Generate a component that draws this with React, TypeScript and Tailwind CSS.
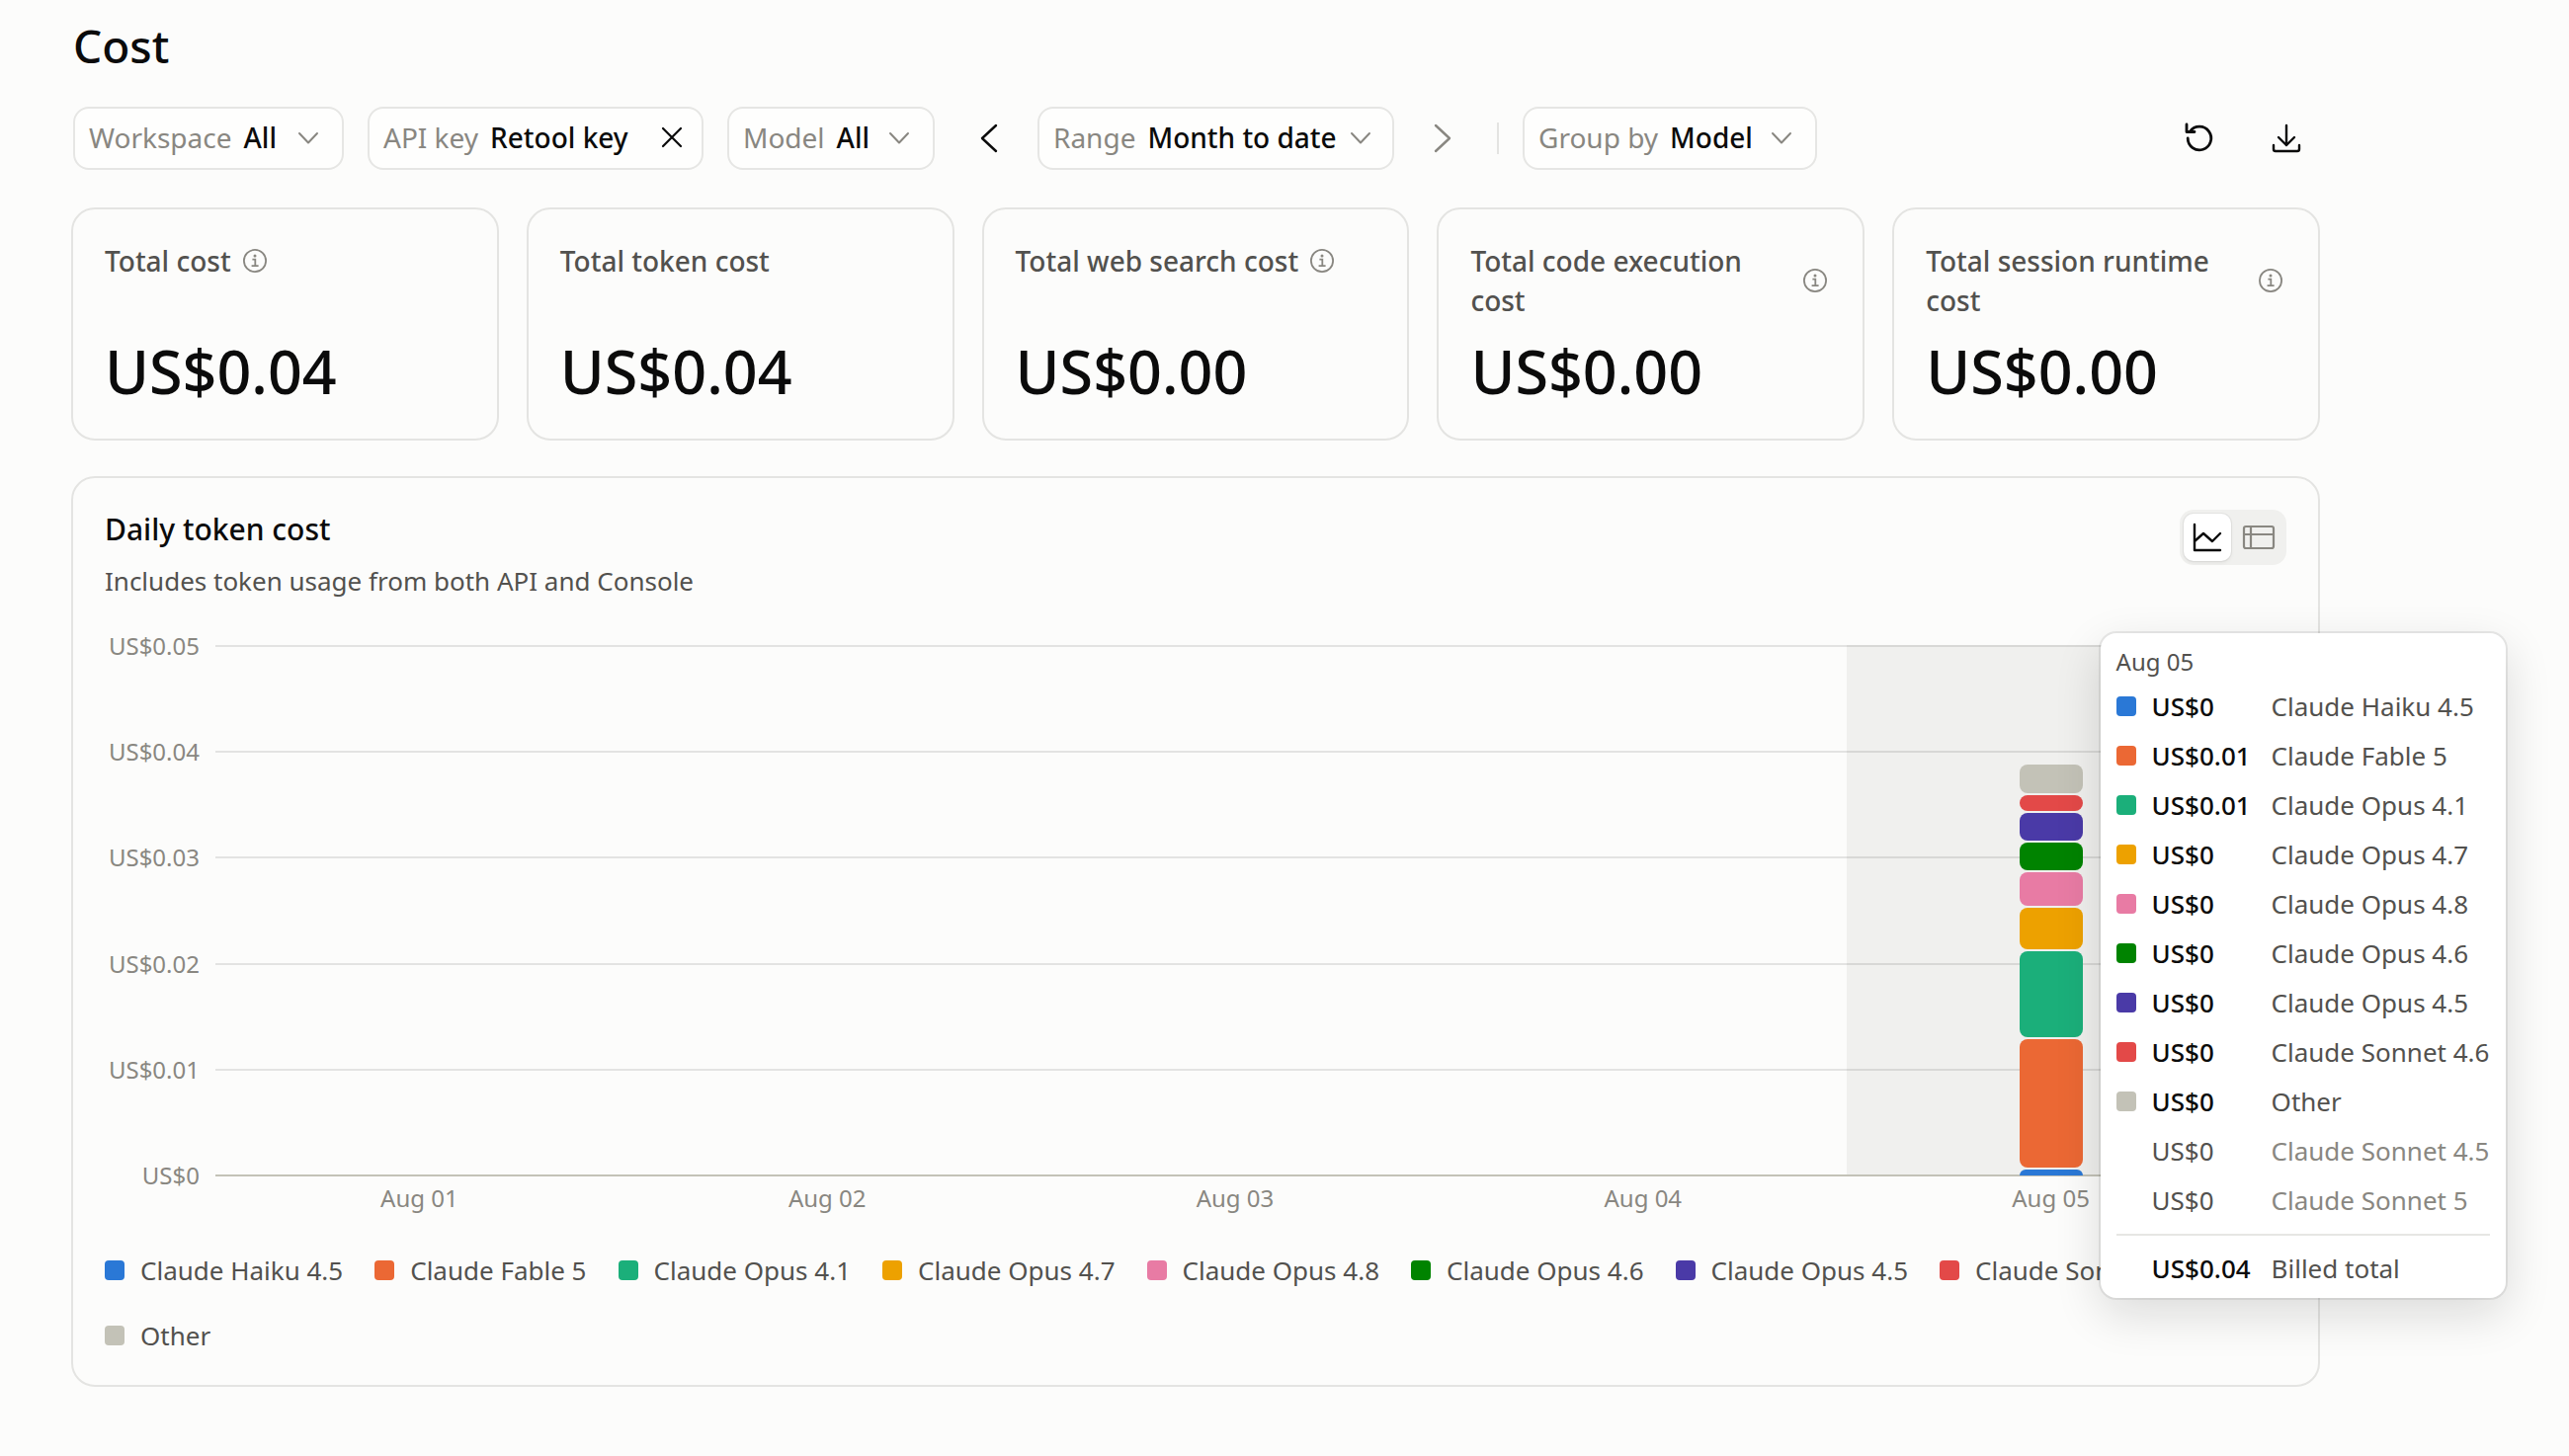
import { useState } from "react";
import type { ReactNode } from "react";
import clsx from "clsx";

interface Series {
  name: string;
  color: string;
  amount: string;
  height: number;
}

// Bottom of the stack first, heights in chart pixels
const series: Series[] = [
  { name: "Claude Haiku 4.5", color: "bg-[#2a78d6]", amount: "US$0", height: 6 },
  { name: "Claude Fable 5", color: "bg-[#eb6834]", amount: "US$0.01", height: 130 },
  { name: "Claude Opus 4.1", color: "bg-[#1baf7a]", amount: "US$0.01", height: 87 },
  { name: "Claude Opus 4.7", color: "bg-[#eda100]", amount: "US$0", height: 42 },
  { name: "Claude Opus 4.8", color: "bg-[#e87ba4]", amount: "US$0", height: 34 },
  { name: "Claude Opus 4.6", color: "bg-[#008300]", amount: "US$0", height: 28 },
  { name: "Claude Opus 4.5", color: "bg-[#4a3aa7]", amount: "US$0", height: 28 },
  { name: "Claude Sonnet 4.6", color: "bg-[#e34948]", amount: "US$0", height: 16 },
  { name: "Other", color: "bg-[#c3c2b7]", amount: "US$0", height: 29 },
];

const hiddenSeries = ["Claude Sonnet 4.5", "Claude Sonnet 5"];
const days = ["Aug 01", "Aug 02", "Aug 03", "Aug 04", "Aug 05"];
const ticks = ["US$0.05", "US$0.04", "US$0.03", "US$0.02", "US$0.01", "US$0"];

const stats = [
  { label: "Total cost", value: "US$0.04", info: true },
  { label: "Total token cost", value: "US$0.04", info: false },
  { label: "Total web search cost", value: "US$0.00", info: true },
  { label: "Total code execution cost", value: "US$0.00", info: true },
  { label: "Total session runtime cost", value: "US$0.00", info: true },
];

function Icon({ d, className }: { d: string; className: string }) {
  return (
    <svg
      viewBox="0 0 40 40"
      fill="none"
      stroke="currentColor"
      strokeLinecap="round"
      strokeLinejoin="round"
      className={className}
      aria-hidden="true"
    >
      <path d={d} />
    </svg>
  );
}

function InfoIcon() {
  return (
    <svg
      viewBox="0 0 32 32"
      fill="none"
      stroke="currentColor"
      strokeWidth="1.8"
      className="size-8 shrink-0 text-[#898781]"
      aria-hidden="true"
    >
      <circle cx="16" cy="16" r="11.1" />
      <path d="M13.4 14.6h2.9v6.2M12.6 21.2h7" />
      <circle cx="16" cy="11" r="1.5" fill="currentColor" stroke="none" />
    </svg>
  );
}

interface FilterChipProps {
  label: string;
  value: string;
  className: string;
  clearable?: boolean;
}

function FilterChip({ label, value, className, clearable }: FilterChipProps) {
  return (
    <button
      type="button"
      className={clsx(
        "flex h-16 shrink-0 items-center gap-3 whitespace-nowrap rounded-2xl border-2 border-[#e6e6e4] bg-[#fefefd] pb-0.5 pl-[14px]",
        className
      )}
    >
      <span className="text-[#898781]">{label}</span>
      <span className="font-medium">{value}</span>
      {clearable ? (
        <svg viewBox="0 0 24 24" className="mr-[18px] ml-auto size-6" fill="none" stroke="currentColor" strokeWidth="2.2" strokeLinecap="round">
          <path d="M3 3l18 18M21 3L3 21" />
        </svg>
      ) : (
        <svg viewBox="0 0 24 24" className="mr-[22px] ml-auto size-6 shrink-0 text-[#898781]" fill="none" stroke="currentColor" strokeWidth="2" strokeLinecap="round" strokeLinejoin="round">
          <path d="M3 8l9 9.5L21 8" />
        </svg>
      )}
    </button>
  );
}

function IconButton({ label, className, children }: { label: string; className: string; children: ReactNode }) {
  return (
    <button
      type="button"
      aria-label={label}
      className={clsx("flex h-14 shrink-0 items-center justify-center rounded-xl", className)}
    >
      {children}
    </button>
  );
}

function StatCard({ label, value, info }: { label: string; value: string; info: boolean }) {
  return (
    <div className="flex flex-1 flex-col justify-between gap-4 rounded-3xl border-2 border-[#e4e4e2] p-8">
      <div className="flex items-center gap-2">
        <span className="text-[28px] leading-10 font-medium text-[#52514e]">{label}</span>
        {info && <InfoIcon />}
      </div>
      <div className="text-[61px] leading-[72px] font-medium">{value}</div>
    </div>
  );
}

function ChartTooltip() {
  return (
    <div className="absolute top-[-12px] left-full z-10 ml-[18px] w-[410px] rounded-2xl bg-white px-4 pt-[11px] pb-2 text-[26px] shadow-[0_0_0_2px_rgba(11,11,11,0.08),0_16px_48px_rgba(11,11,11,0.14)]">
      <div className="mb-0.5 text-2xl leading-9 text-[#52514e]">Aug 05</div>
      {series.map((s) => (
        <div key={s.name} className="flex h-[50px] items-center whitespace-nowrap">
          <span className={clsx("mr-4 size-5 rounded", s.color)} />
          <span className="w-[121px] font-medium">{s.amount}</span>
          <span className="text-[#52514e]">{s.name}</span>
        </div>
      ))}
      {hiddenSeries.map((name) => (
        <div key={name} className="flex h-[50px] items-center whitespace-nowrap pl-9">
          <span className="w-[121px] text-[#52514e]">US$0</span>
          <span className="text-[#898781]">{name}</span>
        </div>
      ))}
      <div className="mt-[9px] flex items-center border-t-2 border-[#e6e6e4] pt-[11px] pl-9 leading-[44px]">
        <span className="w-[121px] font-medium">US$0.04</span>
        <span className="text-[#52514e]">Billed total</span>
      </div>
    </div>
  );
}

function CostChart() {
  return (
    <div className="flex gap-4 pr-8 text-2xl text-[#898781]">
      <div className="flex h-[538px] w-24 flex-col justify-between text-right">
        {ticks.map((tick) => (
          <div key={tick} className="flex h-0.5 items-center justify-end">
            {tick}
          </div>
        ))}
      </div>
      <div className="flex-1">
        <div className="grid h-[538px]">
          {/* Hovered day */}
          <div className="col-start-1 row-start-1 grid grid-cols-5">
            <div className="col-start-5 bg-[#f0f0ee]" />
          </div>
          {/* Grid lines */}
          <div className="col-start-1 row-start-1 flex flex-col justify-between">
            {ticks.map((tick) => (
              <div key={tick} className={clsx("h-0.5", tick === "US$0" ? "bg-[#c3c2b7]" : "bg-[#0b0b0b]/10")} />
            ))}
          </div>
          {/* Stacked bar */}
          <div className="col-start-1 row-start-1 grid grid-cols-5">
            <div className="relative col-start-5 flex w-16 flex-col-reverse gap-0.5 justify-self-center pb-px text-[#0b0b0b]">
              {series.map((s, i) => (
                <div
                  key={s.name}
                  className={clsx(s.color, i === 0 ? "rounded-t-md" : "rounded-lg")}
                  style={{ height: s.height }}
                />
              ))}
              <ChartTooltip />
            </div>
          </div>
        </div>
        <div className="mt-1.5 grid grid-cols-5 text-center leading-8">
          {days.map((day) => (
            <span key={day}>{day}</span>
          ))}
        </div>
      </div>
    </div>
  );
}

export default function App() {
  const [view, setView] = useState<"chart" | "table">("chart");

  return (
    <main className="min-h-screen bg-[#fcfcfb] pt-4 pr-[252px] pb-[70px] pl-[72px] font-['Noto_Sans',sans-serif] text-[#0b0b0b]">
      <h1 className="px-0.5 text-[46px] leading-[60px] font-medium">Cost</h1>

      {/* Filters */}
      <div className="mt-8 flex items-center gap-6 px-0.5 text-[28px]">
        <FilterChip label="Workspace" value="All" className="w-[274px]" />
        <FilterChip label="API key" value="Retool key" className="w-[340px]" clearable />
        <FilterChip label="Model" value="All" className="w-[210px]" />
        <IconButton label="Previous range" className="w-14">
          <Icon d="M30 7L16 20l14 13" className="size-10 [stroke-width:2.4]" />
        </IconButton>
        <FilterChip label="Range" value="Month to date" className="w-[361px]" />
        <IconButton label="Next range" className="w-14 text-[#898781]">
          <Icon d="M10 7l14 13-14 13" className="size-10 [stroke-width:2.4]" />
        </IconButton>
        <div className="h-8 w-0.5 bg-[#e4e4e2]" />
        <FilterChip label="Group by" value="Model" className="w-[298px]" />
        <div className="ml-auto flex gap-6">
          <IconButton label="Refresh" className="w-16">
            <Icon
              d="M7 6v7.5h8M10.5 13A11.8 11.8 0 1 1 8.2 20"
              className="size-10 [stroke-width:2.8]"
            />
          </IconButton>
          <IconButton label="Download" className="w-16">
            <Icon
              d="M20 7v20M12 19l8 8 8-8M7 27v4a2 2 0 0 0 2 2h22a2 2 0 0 0 2-2v-4"
              className="size-10 [stroke-width:2.4]"
            />
          </IconButton>
        </div>
      </div>

      {/* Totals */}
      <div className="mt-[38px] flex gap-7">
        {stats.map((stat) => (
          <StatCard key={stat.label} {...stat} />
        ))}
      </div>

      {/* Daily cost */}
      <section className="mt-9 rounded-3xl border-2 border-[#e4e4e2] px-8 pt-8 pb-[30px]">
        <div className="flex items-start justify-between">
          <div>
            <h2 className="text-[30px] leading-10 font-medium">Daily token cost</h2>
            <p className="mt-3 text-[26px] leading-10 text-[#52514e]">
              Includes token usage from both API and Console
            </p>
          </div>
          <div className="flex gap-1 rounded-[14px] bg-[#f0f0ee] p-1">
            <button
              type="button"
              aria-label="Chart view"
              aria-pressed={view === "chart"}
              onClick={() => setView("chart")}
              className="flex size-12 items-center justify-center rounded-[10px] bg-white shadow-[0_0_0_1px_rgba(11,11,11,0.05),0_2px_4px_rgba(11,11,11,0.06)]"
            >
              <Icon d="M7 7v26h26M7 24l9-8 9 8 8-8" className="size-10 [stroke-width:2.4]" />
            </button>
            <button
              type="button"
              aria-label="Table view"
              aria-pressed={view === "table"}
              onClick={() => setView("table")}
              className="flex size-12 items-center justify-center rounded-[10px] text-[#898781]"
            >
              <Icon
                d="M7 9h26a2 2 0 0 1 2 2v18a2 2 0 0 1-2 2H7a2 2 0 0 1-2-2V11a2 2 0 0 1 2-2zM5 17h30M12 9v22"
                className="size-10 [stroke-width:2.2]"
              />
            </button>
          </div>
        </div>

        <div className="mt-[45px]">
          <CostChart />
        </div>

        <ul className="mt-[37px] flex flex-wrap gap-x-8 gap-y-[26px] text-[26px] leading-10 text-[#52514e]">
          {series.map((s) => (
            <li key={s.name} className="flex items-center gap-4">
              <span className={clsx("size-5 rounded", s.color)} />
              {s.name}
            </li>
          ))}
        </ul>
      </section>
    </main>
  );
}
